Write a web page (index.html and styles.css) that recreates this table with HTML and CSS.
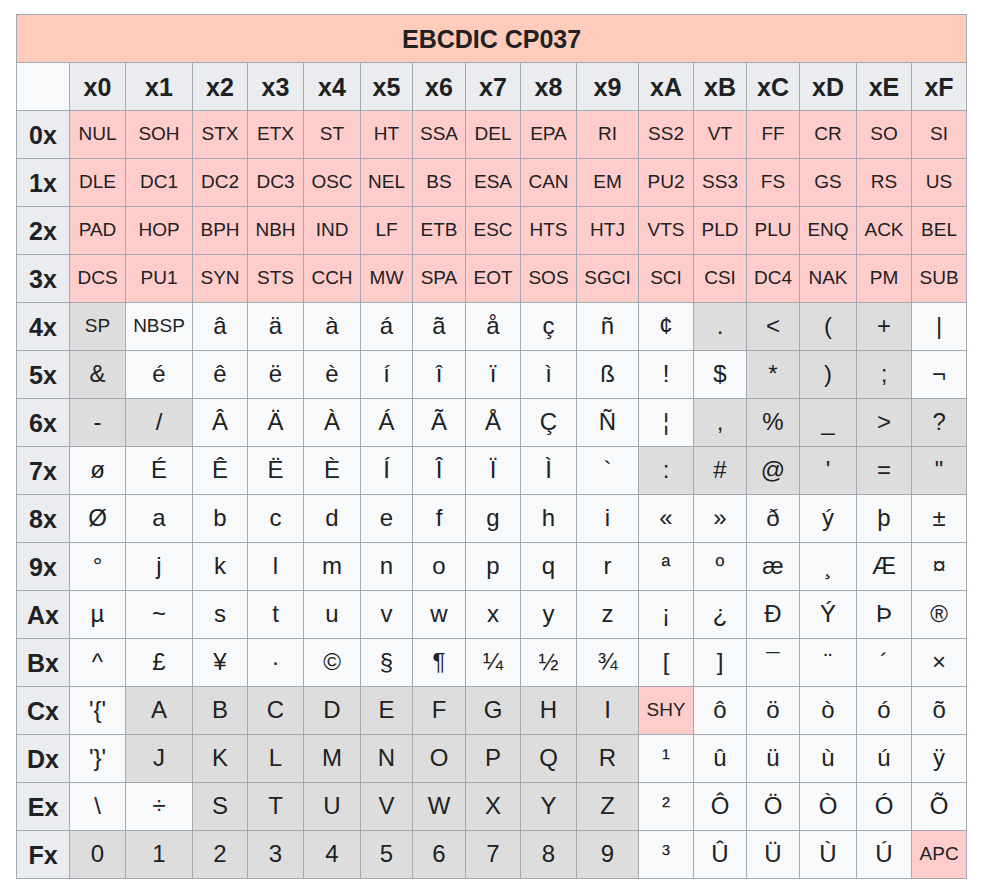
FILE: index.html
```html
<!DOCTYPE html>
<html lang="en">
<head>
<meta charset="utf-8">
<title>EBCDIC CP037</title>
<link rel="stylesheet" href="styles.css">
</head>
<body>
<div class="page">
<table class="chart">
<colgroup>
<col class="w53"><col class="w56"><col class="w67"><col class="w55"><col class="w56"><col class="w57"><col class="w52"><col class="w53"><col class="w55"><col class="w56"><col class="w62"><col class="w55"><col class="w53"><col class="w53"><col class="w57"><col class="w55"><col class="w55">
</colgroup>
<thead>
<tr><th class="title" colspan="17">EBCDIC CP037</th></tr>
<tr><th class="corner"></th><th>x0</th><th>x1</th><th>x2</th><th>x3</th><th>x4</th><th>x5</th><th>x6</th><th>x7</th><th>x8</th><th>x9</th><th>xA</th><th>xB</th><th>xC</th><th>xD</th><th>xE</th><th>xF</th></tr>
</thead>
<tbody>
<tr><th>0x</th><td class="c">NUL</td><td class="c">SOH</td><td class="c">STX</td><td class="c">ETX</td><td class="c">ST</td><td class="c">HT</td><td class="c">SSA</td><td class="c">DEL</td><td class="c">EPA</td><td class="c">RI</td><td class="c">SS2</td><td class="c">VT</td><td class="c">FF</td><td class="c">CR</td><td class="c">SO</td><td class="c">SI</td></tr>
<tr><th>1x</th><td class="c">DLE</td><td class="c">DC1</td><td class="c">DC2</td><td class="c">DC3</td><td class="c">OSC</td><td class="c">NEL</td><td class="c">BS</td><td class="c">ESA</td><td class="c">CAN</td><td class="c">EM</td><td class="c">PU2</td><td class="c">SS3</td><td class="c">FS</td><td class="c">GS</td><td class="c">RS</td><td class="c">US</td></tr>
<tr><th>2x</th><td class="c">PAD</td><td class="c">HOP</td><td class="c">BPH</td><td class="c">NBH</td><td class="c">IND</td><td class="c">LF</td><td class="c">ETB</td><td class="c">ESC</td><td class="c">HTS</td><td class="c">HTJ</td><td class="c">VTS</td><td class="c">PLD</td><td class="c">PLU</td><td class="c">ENQ</td><td class="c">ACK</td><td class="c">BEL</td></tr>
<tr><th>3x</th><td class="c">DCS</td><td class="c">PU1</td><td class="c">SYN</td><td class="c">STS</td><td class="c">CCH</td><td class="c">MW</td><td class="c">SPA</td><td class="c">EOT</td><td class="c">SOS</td><td class="c">SGCI</td><td class="c">SCI</td><td class="c">CSI</td><td class="c">DC4</td><td class="c">NAK</td><td class="c">PM</td><td class="c">SUB</td></tr>
<tr><th>4x</th><td class="g sm">SP</td><td class="sm">NBSP</td><td>â</td><td>ä</td><td>à</td><td>á</td><td>ã</td><td>å</td><td>ç</td><td>ñ</td><td>¢</td><td class="g">.</td><td class="g">&lt;</td><td class="g">(</td><td class="g">+</td><td>|</td></tr>
<tr><th>5x</th><td class="g">&amp;</td><td>é</td><td>ê</td><td>ë</td><td>è</td><td>í</td><td>î</td><td>ï</td><td>ì</td><td>ß</td><td>!</td><td>$</td><td class="g">*</td><td class="g">)</td><td class="g">;</td><td>¬</td></tr>
<tr><th>6x</th><td class="g">-</td><td class="g">/</td><td>Â</td><td>Ä</td><td>À</td><td>Á</td><td>Ã</td><td>Å</td><td>Ç</td><td>Ñ</td><td>¦</td><td class="g">,</td><td class="g">%</td><td class="g">_</td><td class="g">&gt;</td><td class="g">?</td></tr>
<tr><th>7x</th><td>ø</td><td>É</td><td>Ê</td><td>Ë</td><td>È</td><td>Í</td><td>Î</td><td>Ï</td><td>Ì</td><td>`</td><td class="g">:</td><td class="g">#</td><td class="g">@</td><td class="g">'</td><td class="g">=</td><td class="g">"</td></tr>
<tr><th>8x</th><td>Ø</td><td>a</td><td>b</td><td>c</td><td>d</td><td>e</td><td>f</td><td>g</td><td>h</td><td>i</td><td>«</td><td>»</td><td>ð</td><td>ý</td><td>þ</td><td>±</td></tr>
<tr><th>9x</th><td>°</td><td>j</td><td>k</td><td>l</td><td>m</td><td>n</td><td>o</td><td>p</td><td>q</td><td>r</td><td>ª</td><td>º</td><td>æ</td><td>¸</td><td>Æ</td><td>¤</td></tr>
<tr><th>Ax</th><td>µ</td><td>~</td><td>s</td><td>t</td><td>u</td><td>v</td><td>w</td><td>x</td><td>y</td><td>z</td><td>¡</td><td>¿</td><td>Ð</td><td>Ý</td><td>Þ</td><td>®</td></tr>
<tr><th>Bx</th><td>^</td><td>£</td><td>¥</td><td>·</td><td>©</td><td>§</td><td>¶</td><td>¼</td><td>½</td><td>¾</td><td>[</td><td>]</td><td>¯</td><td>¨</td><td>´</td><td>×</td></tr>
<tr><th>Cx</th><td>'{'</td><td class="g">A</td><td class="g">B</td><td class="g">C</td><td class="g">D</td><td class="g">E</td><td class="g">F</td><td class="g">G</td><td class="g">H</td><td class="g">I</td><td class="c">SHY</td><td>ô</td><td>ö</td><td>ò</td><td>ó</td><td>õ</td></tr>
<tr><th>Dx</th><td>'}'</td><td class="g">J</td><td class="g">K</td><td class="g">L</td><td class="g">M</td><td class="g">N</td><td class="g">O</td><td class="g">P</td><td class="g">Q</td><td class="g">R</td><td>¹</td><td>û</td><td>ü</td><td>ù</td><td>ú</td><td>ÿ</td></tr>
<tr><th>Ex</th><td>\</td><td>÷</td><td class="g">S</td><td class="g">T</td><td class="g">U</td><td class="g">V</td><td class="g">W</td><td class="g">X</td><td class="g">Y</td><td class="g">Z</td><td>²</td><td>Ô</td><td>Ö</td><td>Ò</td><td>Ó</td><td>Õ</td></tr>
<tr><th>Fx</th><td class="g">0</td><td class="g">1</td><td class="g">2</td><td class="g">3</td><td class="g">4</td><td class="g">5</td><td class="g">6</td><td class="g">7</td><td class="g">8</td><td class="g">9</td><td>³</td><td>Û</td><td>Ü</td><td>Ù</td><td>Ú</td><td class="c">APC</td></tr>
</tbody>
</table>
</div>
</body>
</html>
```
FILE: styles.css
```css
html, body {
  margin: 0;
  padding: 0;
  background: #ffffff;
}

.page {
  padding: 14px 16px;
  font-family: "Liberation Sans", Arial, sans-serif;
  color: #202122;
}

.chart {
  table-layout: fixed;
  width: 951px;
  border-collapse: separate;
  border-spacing: 0;
  border-top: 1px solid #a2a9b1;
  border-left: 1px solid #a2a9b1;
  background: #f8f9fa;
}

.w52 { width: 52px; }
.w53 { width: 53px; }
.w55 { width: 55px; }
.w56 { width: 56px; }
.w57 { width: 57px; }
.w62 { width: 62px; }
.w67 { width: 67px; }

.chart th,
.chart td {
  box-sizing: border-box;
  height: 48px;
  padding: 0;
  border-right: 1px solid #a2a9b1;
  border-bottom: 1px solid #a2a9b1;
  text-align: center;
  vertical-align: middle;
  white-space: nowrap;
  overflow: hidden;
  line-height: 1.2;
}

.chart th {
  background: #eaecf0;
  font-weight: bold;
  font-size: 25px;
}

.chart th.title {
  background: #ffccbb;
}

.chart th.corner {
  background: #f8f9fa;
}

.chart td {
  font-size: 24px;
  background: #f8f9fa;
}

.chart td.c {
  background: #ffcccc;
  font-size: 19px;
}

.chart td.g {
  background: #dddddd;
}

.chart td.sm {
  font-size: 19px;
}
```
